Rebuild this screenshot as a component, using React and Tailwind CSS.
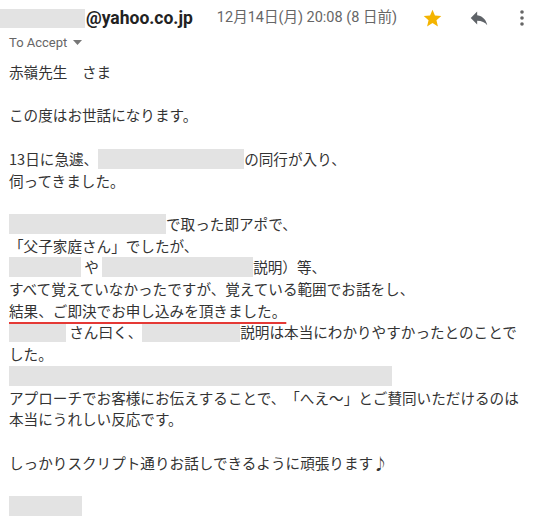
import React from "react";

const Blur = ({ w, className = "" }) => (
  <span
    className={`inline-block h-[20px] align-[-4px] bg-[#e3e3e3] ${className}`}
    style={{ width: w }}
  />
);

export default function App() {
  return (
    <div className="w-[540px] h-[525px] bg-white overflow-hidden [text-spacing-trim:space-all]" style={{ fontFamily: '"Noto Sans CJK JP", "Noto Sans", sans-serif' }}>
      {/* header */}
      <div className="flex items-center h-[36px] pr-[10px]">
        <span className="inline-block w-[85px] h-[19px] bg-[#e3e3e3]" />
        <span className="text-[17.5px] font-bold text-[#222] ml-[1px]" style={{ fontFamily: 'Roboto, "Liberation Sans", sans-serif' }}>@yahoo.co.jp</span>
        <span className="ml-[24px] text-[14.5px] text-[#666]" style={{ fontFamily: 'Roboto, "Noto Sans CJK JP", sans-serif' }}>12月14日(月) 20:08 (8 日前)</span>
        <svg className="ml-[25px]" width="21" height="21" viewBox="0 0 24 24"><path fill="#f4b400" d="M12 17.27L18.18 21l-1.64-7.03L22 9.24l-7.19-.61L12 2 9.19 8.63 2 9.24l5.46 4.73L5.82 21z" /></svg>
        <svg className="ml-[25px]" width="22" height="22" viewBox="0 0 24 24"><path fill="#5f6368" d="M10 9V5l-7 7 7 7v-4.1c5 0 8.5 1.6 11 5.1-1-5-4-10-11-11z" /></svg>
        <svg className="ml-[29px]" width="6" height="18" viewBox="0 0 6 18"><circle cx="3" cy="3" r="1.8" fill="#666" /><circle cx="3" cy="9" r="1.8" fill="#666" /><circle cx="3" cy="15" r="1.8" fill="#666" /></svg>
      </div>
      <div className="pl-[9px] flex items-center h-[14px] text-[13px] text-[#666]" style={{ fontFamily: 'Roboto, "Liberation Sans", sans-serif' }}>
        To Accept
        <svg className="ml-[6px]" width="9" height="6" viewBox="0 0 9 6"><path d="M0 0h9L4.5 5z" fill="#777" /></svg>
      </div>
      {/* body */}
      <div className="pl-[9px] pt-[11px] text-[14.6px] leading-[21.7px] text-[#333] whitespace-nowrap">
        <div>赤嶺先生　さま</div>
        <div>&nbsp;</div>
        <div>この度はお世話になります。</div>
        <div>&nbsp;</div>
        <div>13日に急遽、<Blur w={146} />の同行が入り、</div>
        <div>伺ってきました。</div>
        <div>&nbsp;</div>
        <div><Blur w={157} />で取った即アポで、</div>
        <div>「父子家庭さん」でしたが、</div>
        <div><Blur w={72} />&nbsp;や&nbsp;<Blur w={151} />説明）等、</div>
        <div>すべて覚えていなかったですが、覚えている範囲でお話をし、</div>
        <div className="relative z-10"><span className="underline decoration-[#e53935] decoration-2 underline-offset-[5px]">結果、ご即決でお申し込みを頂きました。</span></div>
        <div><Blur w={57} />&nbsp;さん曰く、<Blur w={98} />説明は本当にわかりやすかったとのことで</div>
        <div>した。</div>
        <div><Blur w={383} /></div>
        <div>アプローチでお客様にお伝えすることで、「へえ～」とご賛同いただけるのは</div>
        <div>本当にうれしい反応です。</div>
        <div>&nbsp;</div>
        <div>しっかりスクリプト通りお話しできるように頑張ります♪</div>
        <div>&nbsp;</div>
        <div><Blur w={73} /></div>
      </div>
    </div>
  );
}
